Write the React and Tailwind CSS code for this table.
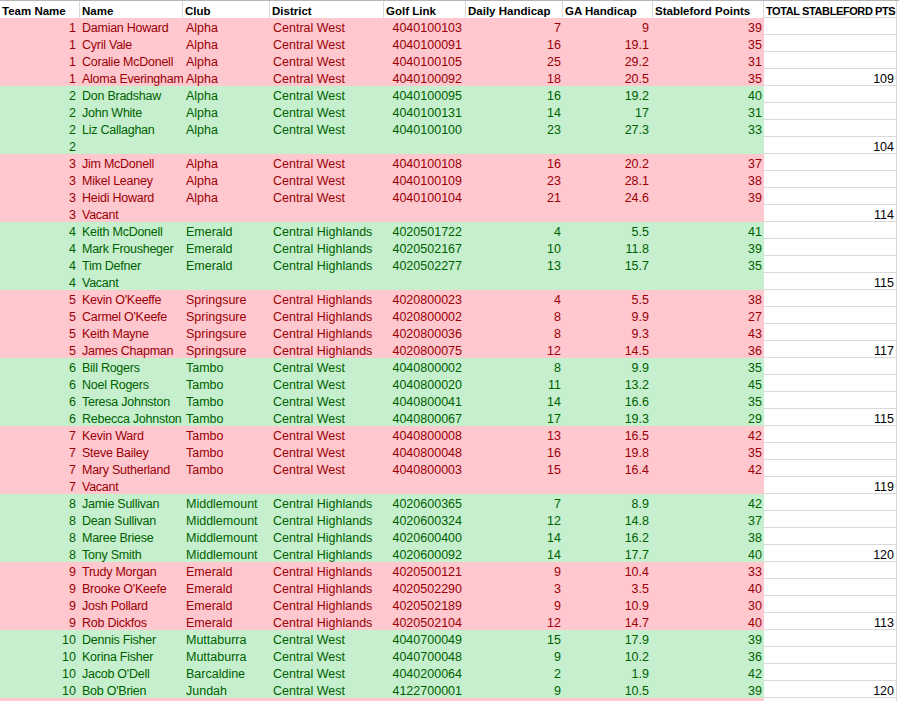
import React from 'react';

const CW = 'Central West';
const CH = 'Central Highlands';

// team, name, club, district, golf link, daily, ga, points, total
const rows = [
  [1, 'Damian Howard', 'Alpha', CW, '4040100103', 7, 9, 39],
  [1, 'Cyril Vale', 'Alpha', CW, '4040100091', 16, 19.1, 35],
  [1, 'Coralie McDonell', 'Alpha', CW, '4040100105', 25, 29.2, 31],
  [1, 'Aloma Everingham', 'Alpha', CW, '4040100092', 18, 20.5, 35, 109],
  [2, 'Don Bradshaw', 'Alpha', CW, '4040100095', 16, 19.2, 40],
  [2, 'John White', 'Alpha', CW, '4040100131', 14, 17, 31],
  [2, 'Liz Callaghan', 'Alpha', CW, '4040100100', 23, 27.3, 33],
  [2, '', '', '', '', '', '', '', 104],
  [3, 'Jim McDonell', 'Alpha', CW, '4040100108', 16, 20.2, 37],
  [3, 'Mikel Leaney', 'Alpha', CW, '4040100109', 23, 28.1, 38],
  [3, 'Heidi Howard', 'Alpha', CW, '4040100104', 21, 24.6, 39],
  [3, 'Vacant', '', '', '', '', '', '', 114],
  [4, 'Keith McDonell', 'Emerald', CH, '4020501722', 4, 5.5, 41],
  [4, 'Mark Frousheger', 'Emerald', CH, '4020502167', 10, 11.8, 39],
  [4, 'Tim Defner', 'Emerald', CH, '4020502277', 13, 15.7, 35],
  [4, 'Vacant', '', '', '', '', '', '', 115],
  [5, "Kevin O'Keeffe", 'Springsure', CH, '4020800023', 4, 5.5, 38],
  [5, "Carmel O'Keefe", 'Springsure', CH, '4020800002', 8, 9.9, 27],
  [5, 'Keith Mayne', 'Springsure', CH, '4020800036', 8, 9.3, 43],
  [5, 'James Chapman', 'Springsure', CH, '4020800075', 12, 14.5, 36, 117],
  [6, 'Bill Rogers', 'Tambo', CW, '4040800002', 8, 9.9, 35],
  [6, 'Noel Rogers', 'Tambo', CW, '4040800020', 11, 13.2, 45],
  [6, 'Teresa Johnston', 'Tambo', CW, '4040800041', 14, 16.6, 35],
  [6, 'Rebecca Johnston', 'Tambo', CW, '4040800067', 17, 19.3, 29, 115],
  [7, 'Kevin Ward', 'Tambo', CW, '4040800008', 13, 16.5, 42],
  [7, 'Steve Bailey', 'Tambo', CW, '4040800048', 16, 19.8, 35],
  [7, 'Mary Sutherland', 'Tambo', CW, '4040800003', 15, 16.4, 42],
  [7, 'Vacant', '', '', '', '', '', '', 119],
  [8, 'Jamie Sullivan', 'Middlemount', CH, '4020600365', 7, 8.9, 42],
  [8, 'Dean Sullivan', 'Middlemount', CH, '4020600324', 12, 14.8, 37],
  [8, 'Maree Briese', 'Middlemount', CH, '4020600400', 14, 16.2, 38],
  [8, 'Tony Smith', 'Middlemount', CH, '4020600092', 14, 17.7, 40, 120],
  [9, 'Trudy Morgan', 'Emerald', CH, '4020500121', 9, 10.4, 33],
  [9, "Brooke O'Keefe", 'Emerald', CH, '4020502290', 3, 3.5, 40],
  [9, 'Josh Pollard', 'Emerald', CH, '4020502189', 9, 10.9, 30],
  [9, 'Rob Dickfos', 'Emerald', CH, '4020502104', 12, 14.7, 40, 113],
  [10, 'Dennis Fisher', 'Muttaburra', CW, '4040700049', 15, 17.9, 39],
  [10, 'Korina Fisher', 'Muttaburra', CW, '4040700048', 9, 10.2, 36],
  [10, "Jacob O'Dell", 'Barcaldine', CW, '4040200064', 2, 1.9, 42],
  [10, "Bob O'Brien", 'Jundah', CW, '4122700001', 9, 10.5, 39, 120],
];

const grid = 'grid grid-cols-[80px_103px_87px_114px_82px_97px_90px_111px_133px]';

function Head({ children, last }) {
  return (
    <div className={`h-[17px] leading-[14px] pt-[3px] pl-[2px] font-bold text-black whitespace-nowrap overflow-hidden border-r border-[#d9d9d9] ${last ? 'border-b text-[11px] tracking-[-0.4px]' : 'text-[11.5px]'}`}>
      {children}
    </div>
  );
}

export default function App() {
  return (
    <div className="w-[899px] h-[701px] overflow-hidden bg-white" style={{ fontFamily: '"Liberation Sans", Arial, sans-serif' }}>
      <div className="border-t border-[#b5b5b5]">
        <div className={grid}>
          <Head>Team Name</Head>
          <Head>Name</Head>
          <Head>Club</Head>
          <Head>District</Head>
          <Head>Golf Link</Head>
          <Head>Daily Handicap</Head>
          <Head>GA Handicap</Head>
          <Head>Stableford Points</Head>
          <Head last>TOTAL STABLEFORD PTS</Head>
        </div>
        {rows.map((r, i) => {
          const pink = r[0] % 2 === 1;
          const fill = pink ? 'bg-[#ffc7ce] text-[#9c0006]' : 'bg-[#c6efce] text-[#006100]';
          const cell = 'h-[17px] leading-[14px] pt-[3px] text-[12.5px] whitespace-nowrap overflow-hidden';
          return (
            <div key={i} className={grid}>
              <div className={`${cell} ${fill} text-right pr-[4px]`}>{r[0]}</div>
              <div className={`${cell} ${fill} pl-[2px] tracking-[-0.25px]`}>{r[1]}</div>
              <div className={`${cell} ${fill} pl-[3px]`}>{r[2]}</div>
              <div className={`${cell} ${fill} pl-[3px]`}>{r[3]}</div>
              <div className={`${cell} ${fill} text-right pr-[4px]`}>{r[4]}</div>
              <div className={`${cell} ${fill} text-right pr-[2px]`}>{r[5]}</div>
              <div className={`${cell} ${fill} text-right pr-[4px]`}>{r[6]}</div>
              <div className={`${cell} ${fill} text-right pr-[2px]`}>{r[7]}</div>
              <div className={`${cell} text-black text-right pr-[2px] border-r border-b border-[#d9d9d9]`}>{r[8] ?? ''}</div>
            </div>
          );
        })}
        {/* next team, cut off by the window */}
        <div className={grid}>
          <div className="h-[17px] bg-[#ffc7ce] col-span-8" />
          <div className="h-[17px] border-r border-b border-[#d9d9d9]" />
        </div>
      </div>
    </div>
  );
}
